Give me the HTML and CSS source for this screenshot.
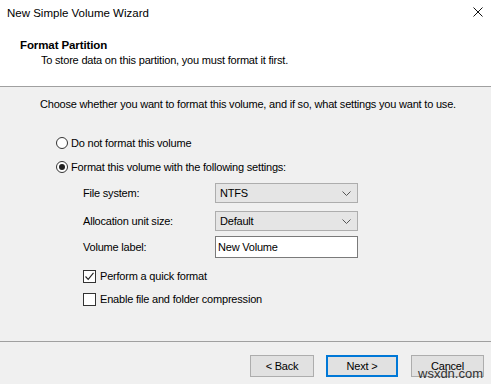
FILE: index.html
```html
<!DOCTYPE html>
<html>
<head>
<meta charset="utf-8">
<link rel="stylesheet" href="styles.css">
</head>
<body>
<div class="window">
  <div class="titlebar">
    <span class="title">New Simple Volume Wizard</span>
    <svg class="close" width="10" height="10" viewBox="0 0 10 10"><path d="M0.5 0.5 L9.5 9.5 M9.5 0.5 L0.5 9.5" stroke="#111" stroke-width="1"/></svg>
  </div>
  <div class="header">
    <div class="h-title">Format Partition</div>
    <div class="h-sub">To store data on this partition, you must format it first.</div>
  </div>
  <div class="body">
    <div class="intro">Choose whether you want to format this volume, and if so, what settings you want to use.</div>
    <div class="radio-row r1"><span class="radio"></span><span>Do not format this volume</span></div>
    <div class="radio-row r2"><span class="radio on"></span><span>Format this volume with the following settings:</span></div>
    <div class="form">
      <div class="form-row fr1">
        <div class="label">File system:</div>
        <div class="combo"><span>NTFS</span><svg width="9" height="5" viewBox="0 0 9 5"><path d="M0.5 0.5 L4.5 4.5 L8.5 0.5" fill="none" stroke="#555" stroke-width="1"/></svg></div>
      </div>
      <div class="form-row fr2">
        <div class="label">Allocation unit size:</div>
        <div class="combo"><span>Default</span><svg width="9" height="5" viewBox="0 0 9 5"><path d="M0.5 0.5 L4.5 4.5 L8.5 0.5" fill="none" stroke="#555" stroke-width="1"/></svg></div>
      </div>
      <div class="form-row fr3">
        <div class="label">Volume label:</div>
        <div class="textbox">New Volume</div>
      </div>
    </div>
    <div class="check-row c1"><span class="check"><svg width="11" height="11" viewBox="0 0 11 11"><path d="M1.5 5.5 L4.2 8.3 L9.5 1.8" fill="none" stroke="#222" stroke-width="1.1"/></svg></span><span>Perform a quick format</span></div>
    <div class="check-row c2"><span class="check"></span><span>Enable file and folder compression</span></div>
  </div>
  <div class="footer">
    <div class="btn">&lt; Back</div>
    <div class="btn default">Next &gt;</div>
    <div class="btn cancel">Cancel</div>
  </div>
  <div class="watermark">wsxdn.com</div>
</div>
</body>
</html>
```
FILE: styles.css
```css
* { box-sizing: border-box; }
html, body { margin: 0; padding: 0; }
body { background: #f0f0f0; }
.window {
  position: relative;
  width: 491px;
  height: 384px;
  overflow: hidden;
  font-family: "Liberation Sans", Arial, sans-serif;
  font-size: 11px;
  letter-spacing: -0.2px;
  color: #000;
  background: #f0f0f0;
  display: flex;
  flex-direction: column;
}
.titlebar {
  height: 26px;
  background: #fff;
  display: flex;
  align-items: center;
  justify-content: space-between;
  padding: 0 8px 0 7px;
}
.title { font-size: 11.5px; letter-spacing: 0; color: #000; line-height: 24px; }
.close { margin-top: -2px; }
.header {
  height: 61px;
  background: #fff;
  border-bottom: 1px solid #a0a0a0;
  padding: 11px 0 0 20px;
}
.h-title { font-weight: bold; font-size: 11.5px; line-height: 16px; letter-spacing: -0.1px; }
.h-sub { line-height: 15px; padding-left: 21px; }
.body {
  flex: 1;
  display: flex;
  flex-direction: column;
  padding: 9px 0 0 40px;
  border-bottom: 1px solid #a0a0a0;
}
.intro { line-height: 16px; white-space: nowrap; }
.radio-row {
  display: flex;
  align-items: center;
  gap: 3px;
  height: 20px;
  margin-left: 16px;
}
.r1 { margin-top: 21px; }
.r2 { margin-top: 4px; }
.radio {
  width: 12px; height: 12px;
  border: 1px solid #333;
  border-radius: 50%;
  background: #fff;
  display: flex;
  align-items: center;
  justify-content: center;
}
.radio.on::after {
  content: "";
  width: 6px; height: 6px;
  border-radius: 50%;
  background: #222;
}
.form {
  display: flex;
  flex-direction: column;
  margin: 6px 0 0 43px;
}
.form-row {
  display: grid;
  grid-template-columns: 132px 143px;
  align-items: center;
}
.fr2 { margin-top: 8px; }
.fr3 { margin-top: 5px; }
.combo {
  height: 20px;
  background: #e5e5e5;
  border: 1px solid #adadad;
  display: flex;
  align-items: center;
  justify-content: space-between;
  padding: 0 6px 0 4px;
}
.textbox {
  height: 22px;
  background: #fff;
  border: 1px solid #7a7a7a;
  display: flex;
  align-items: center;
  padding-left: 2px;
}
.check-row {
  display: flex;
  align-items: center;
  gap: 4px;
  height: 20px;
  margin-left: 43px;
}
.c1 { margin-top: 8px; }
.c2 { margin-top: 3px; }
.check {
  width: 13px; height: 13px;
  border: 1px solid #333;
  background: #fff;
  display: flex;
  align-items: center;
  justify-content: center;
}
.footer {
  height: 42px;
  display: flex;
  align-items: flex-start;
  padding: 13px 0 0 250px;
}
.btn {
  height: 22px;
  width: 64px;
  background: #e1e1e1;
  border: 1px solid #adadad;
  display: flex;
  align-items: center;
  justify-content: center;
}
.btn.default {
  width: 72px;
  margin-left: 12px;
  border: 2px solid #0078d7;
}
.btn.cancel {
  width: 73px;
  margin-left: 13px;
}
.watermark {
  position: absolute;
  left: 418px;
  top: 366px;
  font-size: 13px;
  letter-spacing: 0;
  color: #333;
}
```
